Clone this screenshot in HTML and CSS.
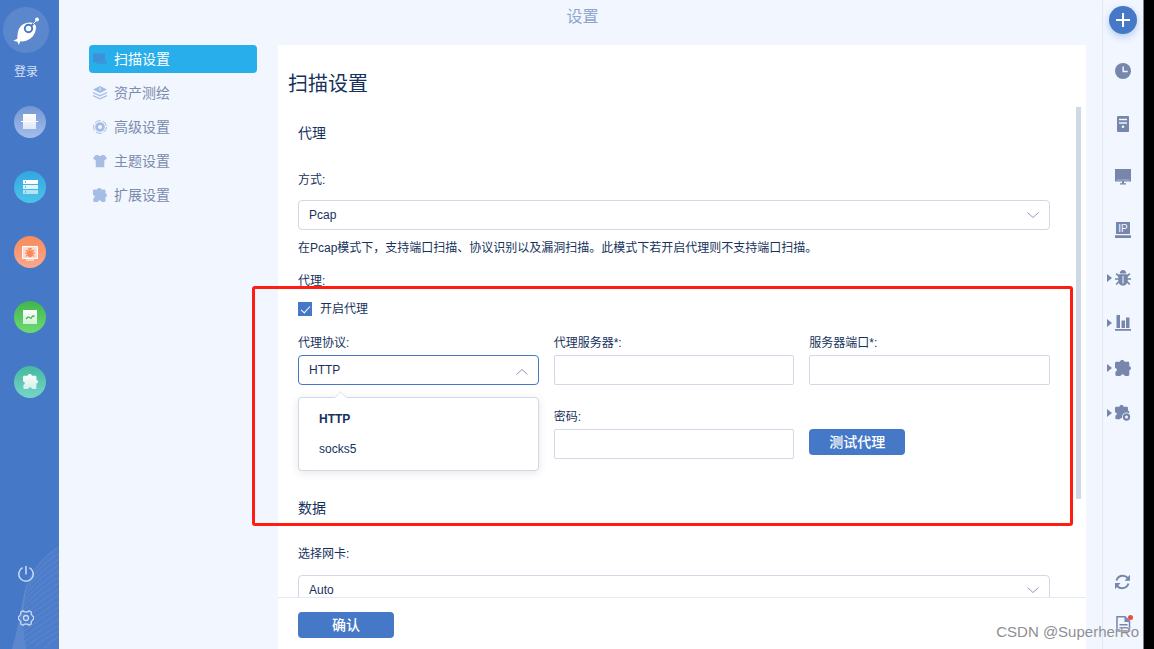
FILE: index.html
```html
<!DOCTYPE html>
<html lang="zh-CN">
<head>
<meta charset="utf-8">
<title>设置</title>
<link rel="stylesheet" href="styles.css">
</head>
<body>
<svg class="defs" aria-hidden="true">
  <defs>
    <linearGradient id="fade" x1="0" y1="0" x2="0" y2="1"><stop offset="0" stop-color="#fff"/><stop offset="1" stop-color="#fff" stop-opacity=".72"/></linearGradient>
    <symbol id="puzzle" viewBox="0 0 16 16"><path d="M1.500 1.800h3.400C5.200.5 6.100 0 7.200 0s2 .5 2.300 1.800h3.500c.8 0 1.300.5 1.300 1.200v3.200c1.100.2 1.700 1 1.700 2s-.6 1.800-1.700 2v4.400c0 .8-.5 1.300-1.300 1.300H9.800c-.2-1-.9-1.500-2.100-1.500s-1.900.5-2.100 1.500H1.700c-.8 0-1.300-.5-1.300-1.300v-3c1-.2 1.500-.8 1.500-1.700S1.400 8.200 0 8V3.200c0-.8.600-1.400 1.500-1.400z"/></symbol>
    <symbol id="bug" viewBox="0 0 16 16"><path d="M4.800 3.400C4.800 1.300 6.200 0 8 0s3.200 1.300 3.200 3.400z"/><path d="M3.300 4.300h9.400v6.200c0 3.100-1.900 5.200-4.700 5.200s-4.700-2.100-4.700-5.200z"/><path d="M4 6.500 1.200 3.700M4 9H0M4 11.500l-2.800 3M12 6.500l2.800-2.800M12 9h4M12 11.500l2.800 3" fill="none" stroke="currentColor" stroke-width="1.700"/></symbol>
  </defs>
</svg>
<div class="app">
  <aside class="side">
    <svg class="waves" viewBox="0 0 59 119" aria-hidden="true">
      <path class="wave-fill" d="M12 119C20 92 22 70 27 52C36 34 46 24 59 16V119z"/>
      <g class="wave-lines"><path d="M27 52Q38 30 59 17M26 57Q38 36 59 23M25 62Q38 42 59 29M24 67Q38 48 59 35M23 72Q38 54 59 41M23 77Q38 60 59 47M22 82Q38 66 59 53M22 87Q38 72 59 59M22 92Q38 78 59 65M23 97Q38 84 59 71M23 102Q38 90 59 77M24 107Q38 96 59 83M24 112Q38 102 59 89M25 117Q38 108 59 95M34 117Q44 108 59 101M44 118Q50 112 59 107"/></g>
      <path class="wave-edge" d="M12 119C20 92 21 70 27 52L22 92L26 119z"/>
    </svg>
    <button class="logo" type="button" aria-label="goby">
      <svg viewBox="0 0 46 46"><path fill="#fff" d="M33 19.500c.2 7.500-4.400 13.900-13.800 15.100l-2-.3-1.300 3.700-1.500-3.200-4-1 3.900-2.100c.1-4.200.5-8.800 3-11.900 3.500-4.300 10-5 14-3.500z"/><circle cx="25.500" cy="21.500" r="3.700" fill="none" stroke="#4678c8" stroke-width="1.900"/><path d="m28.200 18.800 3.500-3.500" stroke="#4678c8" stroke-width="1.900"/><path d="m30.200 16.800 3.600-3.700" stroke="#fff" stroke-width="1"/><circle cx="34" cy="12.500" r="1.900" fill="#fff"/></svg>
    </button>
    <a class="login" href="#">登录</a>
    <nav class="tasks" aria-label="功能">
      <button class="task task-scan" type="button" aria-label="扫描"><svg viewBox="0 0 32 32"><path fill="url(#fade)" d="M9 8h13v15H9z"/><path d="M7 15.500h17" stroke="#fff"/></svg></button>
      <button class="task task-asset" type="button" aria-label="资产"><svg viewBox="0 0 32 32"><path fill="#fff" d="M9 9h15v4H9z"/><path fill="#fff" opacity=".85" d="M9 14h15v4H9z"/><path fill="#fff" opacity=".6" d="M9 19h15v4H9z"/><path d="M11 11h1M11 16h1M11 21h1" stroke="#3aafe0" stroke-width="1.500"/></svg></button>
      <button class="task task-bug" type="button" aria-label="漏洞"><svg viewBox="0 0 32 32"><path fill="#ffd9cc" stroke="#fff" d="M8.500 10.500h15v12h-15z"/><path d="M12 24h8" stroke="#fff" stroke-width="1"/><g color="#f58a5e" fill="#f58a5e"><use href="#bug" x="11" y="11.500" width="10" height="10"/></g></svg></button>
      <button class="task task-report" type="button" aria-label="报告"><svg viewBox="0 0 32 32"><path fill="url(#fade)" d="M9 9h14v14H9z"/><path d="m12 18 2-2 1.500.5 1.500 1 1.500-2.500 1 .5 1-1" fill="none" stroke="#41b84e" stroke-width="1.200"/></svg></button>
      <button class="task task-ext" type="button" aria-label="扩展"><svg viewBox="0 0 32 32"><use href="#puzzle" x="9" y="8" width="15" height="15" fill="url(#fade)"/></svg></button>
    </nav>
    <div class="side-foot">
      <button class="plain" type="button" aria-label="退出"><svg viewBox="0 0 16 16"><path d="M8 0v8.500M4.600 1.700a7.200 7.200 0 1 0 6.800 0" fill="none" stroke="currentColor" stroke-width="1.500"/></svg></button>
      <button class="plain" type="button" aria-label="设置"><svg viewBox="0 0 16 16"><path d="m5 .7 1.400 1.200h3.200L11 .7l2.300 1.300-.2 2L14.500 6l1.200 1v2l-1.200 1-1.400 2 .2 2-2.300 1.300-1.400-1.200H6.400L5 15.300 2.700 14l.2-2-1.400-2L.3 9V7l1.200-1 1.400-2-.2-2z" fill="none" stroke="currentColor" stroke-width="1.300" stroke-linejoin="round"/><circle cx="8" cy="8" r="2.500" fill="none" stroke="currentColor" stroke-width="1.300"/></svg></button>
    </div>
  </aside>

  <div class="main">
    <header class="title">设置</header>
    <div class="work">
      <nav class="menu" aria-label="设置菜单">
        <a class="item active" href="#"><svg viewBox="0 0 14 14"><path d="M0 1.500h12v6H9.500L8 10H0z"/><path d="M3 10.500h5v1.200H3z"/><circle cx="11" cy="9.700" r="1.800" fill="none" stroke="currentColor" stroke-width="1.500"/></svg>扫描设置</a>
        <a class="item" href="#"><svg viewBox="0 0 14 14"><path d="M7 0 0 3.500 7 7l7-3.500z"/><path d="M7 1.500v3" stroke="#f1f6ff"/><path d="m0 6.500 7 3.300 7-3.300M0 9.500l7 3.300 7-3.300" fill="none" stroke="currentColor" stroke-width="1.200"/></svg>资产测绘</a>
        <a class="item" href="#"><svg viewBox="0 0 14 14"><circle cx="7" cy="7" r="3.400" fill="none" stroke="currentColor" stroke-width="2.800"/><circle cx="7" cy="7" r="6.400" fill="none" stroke="currentColor" stroke-width="1" stroke-dasharray="6 2"/></svg>高级设置</a>
        <a class="item" href="#"><svg viewBox="0 0 14 14"><path d="M4.500.7q2.500 2.600 5 0L12 1.500l2 3.300-2.700 1.500v7H2.700v-7L0 4.800l2-3.300z"/></svg>主题设置</a>
        <a class="item" href="#"><svg viewBox="0 0 16 16"><use href="#puzzle"/></svg>扩展设置</a>
      </nav>

      <form class="panel">
        <h1>扫描设置</h1>
        <div class="scroll">
          <section>
            <h2>代理</h2>
            <label class="lbl top" for="mode">方式:</label>
            <div class="sel">
              <select id="mode"><option>Pcap</option></select>
              <svg viewBox="0 0 12 6"><path d="m.5.5 5.500 5 5.500-5"/></svg>
            </div>
            <p class="help">在Pcap模式下，支持端口扫描、协议识别以及漏洞扫描。此模式下若开启代理则不支持端口扫描。</p>
            <div class="lbl">代理:</div>
            <label class="check"><input type="checkbox" checked>开启代理</label>
            <div class="grid">
              <div class="field">
                <label class="lbl" for="proto">代理协议:</label>
                <div class="sel open">
                  <select id="proto"><option>HTTP</option><option>socks5</option></select>
                  <svg viewBox="0 0 12 6"><path d="m.5 5.500 5.500-5 5.500 5"/></svg>
                  <ul class="drop" role="listbox" aria-label="代理协议">
                    <li class="on" role="option" aria-selected="true">HTTP</li>
                    <li role="option" aria-selected="false">socks5</li>
                  </ul>
                </div>
              </div>
              <div class="field">
                <label class="lbl" for="server">代理服务器*:</label>
                <input class="text" id="server" type="text">
              </div>
              <div class="field">
                <label class="lbl" for="port">服务器端口*:</label>
                <input class="text" id="port" type="text">
              </div>
              <div class="field second">
                <label class="lbl" for="pwd">密码:</label>
                <input class="text" id="pwd" type="password">
              </div>
              <div class="field end"><button class="btn" type="button">测试代理</button></div>
            </div>
          </section>
          <section class="data">
            <h2>数据</h2>
            <label class="lbl top" for="card">选择网卡:</label>
            <div class="sel">
              <select id="card"><option>Auto</option></select>
              <svg viewBox="0 0 12 6"><path d="m.5.5 5.500 5 5.500-5"/></svg>
            </div>
          </section>
          <div class="thumb"></div>
        </div>
        <footer><button class="btn" type="button">确认</button></footer>
        <div class="mark"></div>
      </form>
    </div>
  </div>

  <aside class="tools">
    <button class="add" type="button" aria-label="新建"><svg viewBox="0 0 28 28"><path d="M14 7v14M7 14h14" stroke="#fff" stroke-width="2"/></svg></button>
    <div class="group wide">
      <button class="tool" type="button" aria-label="历史"><svg viewBox="0 0 16 16"><circle cx="8" cy="8" r="8"/><path d="M8.200 3.500v5h4.500" fill="none" stroke="#f1f6ff" stroke-width="1.500"/></svg></button>
      <button class="tool" type="button" aria-label="资产"><svg viewBox="0 0 16 16"><rect x="2" width="12" height="16" rx="1"/><path d="M4 3.500h8M4 7h8" stroke="#f1f6ff" stroke-width="1.500"/><circle cx="8" cy="10.800" r="1.300" fill="#f1f6ff"/></svg></button>
      <button class="tool" type="button" aria-label="主机"><svg viewBox="0 0 16 16"><path d="M0 0h16v12.500H0zM7 12h2v2.500H7zM5 14.200h6v1.300H5z"/><path d="M1.500 11h13" stroke="#a9b6d0"/></svg></button>
      <button class="tool" type="button" aria-label="IP"><svg viewBox="0 0 16 16"><path d="M1 0h14v12H1zM0 13.300h16V16H0z"/><text x="8" y="9.800" text-anchor="middle">IP</text></svg></button>
    </div>
    <div class="group">
      <button class="tool more" type="button" aria-label="漏洞"><svg viewBox="0 0 16 16"><use href="#bug"/><path d="M8 6v7.500" stroke="#f1f6ff"/></svg></button>
      <button class="tool more" type="button" aria-label="统计"><svg viewBox="0 0 16 16"><path d="M1.500 0H5v13H1.500zM6.500 5.500H10V13H6.500zM11 2.500h3.500V13H11zM0 14h16v1.800H0z"/></svg></button>
      <button class="tool more" type="button" aria-label="扩展"><svg viewBox="0 0 16 16"><use href="#puzzle"/></svg></button>
      <button class="tool more" type="button" aria-label="扩展设置"><svg viewBox="0 0 16 16"><use href="#puzzle" width="14.500" height="14.500"/><circle cx="11.500" cy="12" r="4.500" fill="#f1f6ff"/><circle cx="11.500" cy="12" r="2.600" fill="none" stroke="currentColor" stroke-width="2.200"/></svg></button>
    </div>
    <div class="group wide last">
      <button class="tool" type="button" aria-label="刷新"><svg viewBox="0 0 16 16"><path d="M1.500 6.500C2.500 3.300 5 1.800 8 1.800c2 0 3.500.8 4.800 2.200M13.500 9.500c-1 3.200-3.500 4.700-6.500 4.700-2 0-3.500-.8-4.800-2.200" fill="none" stroke="currentColor" stroke-width="2"/><path d="M15 .8v6H9.500zM0 15.200V9h5.600z"/></svg></button>
      <button class="tool dot" type="button" aria-label="日志"><svg viewBox="0 0 16 16"><path d="M2 .8h8L14.500 5v10H2z" fill="none" stroke="currentColor" stroke-width="1.500"/><path d="M9.500.8V6h5zM4.500 8h8v1.500h-8zM4.500 11h8v1.500h-8z"/></svg></button>
    </div>
  </aside>
  <div class="edge"></div>
  <div class="credit">CSDN @SuperherRo</div>
</div>
</body>
</html>
```
FILE: styles.css
```css
* { box-sizing: border-box; }
body {
  margin: 0;
  font: 12px/16px "Liberation Sans", "Noto Sans CJK SC", sans-serif;
  color: #16325c;
  background: #f1f6ff;
}
button, select, input { font: inherit; color: inherit; margin: 0; }
button { border: 0; padding: 0; background: none; cursor: pointer; }
a { text-decoration: none; color: inherit; }
svg { display: block; }
.defs { position: absolute; width: 0; height: 0; }
.app { position: relative; display: flex; height: 100vh; overflow: hidden; }

/* left rail */
.side {
  position: relative;
  flex: 0 0 59px;
  display: flex;
  flex-direction: column;
  padding: 7px 0 23px;
  background: #4678c8;
}
.waves { position: absolute; left: 0; bottom: 0; width: 59px; height: 119px; }
.wave-fill { fill: #fff; opacity: .04; }
.wave-edge { fill: #fff; opacity: .08; }
.wave-lines { fill: none; stroke: #fff; stroke-width: 1; opacity: .08; }
.logo { width: 46px; height: 46px; margin-left: 3px; border-radius: 50%; background: #5b87cd; }
.logo svg { width: 46px; height: 46px; }
.login { margin: 11px 0 0 14px; color: #d3e0f5; }
.tasks { display: flex; flex-direction: column; gap: 33px; margin: 26px 0 0 14px; }
.task { width: 32px; height: 32px; border-radius: 50%; }
.task svg { width: 32px; height: 32px; }
.task-scan { background: linear-gradient(#7397d2, #a3bdec); }
.task-asset { background: linear-gradient(#32a7df, #4bc4ea); }
.task-bug { background: linear-gradient(#f78b5b, #f9a88d); }
.task-report { background: linear-gradient(#3fb54c, #6edb72); }
.task-ext { background: linear-gradient(#46b8a0, #77d6c8); }
.side-foot { position: relative; display: flex; flex-direction: column; gap: 28px; margin: auto 0 0 18px; }
.plain { width: 16px; height: 16px; color: #cddcf5; }

/* centre */
.main { flex: 1; min-width: 0; display: flex; flex-direction: column; }
.title { height: 45px; padding: 5px 0 0 4px; line-height: 24px; font-size: 16px; text-align: center; color: #8ea5cc; }
.work { flex: 1; min-height: 0; display: flex; padding: 0 16px 0 30px; }
.menu { flex: 0 0 168px; margin-right: 21px; display: flex; flex-direction: column; gap: 6px; }
.item {
  display: flex;
  align-items: center;
  gap: 7px;
  height: 28px;
  padding-left: 4px;
  border-radius: 4px;
  font-size: 14px;
  color: #7c8bab;
}
.item svg { width: 14px; height: 14px; color: #a5bce4; fill: currentColor; }
.item.active { background: #28aeea; color: #fff; }
.item.active svg { color: #3e90d8; }

.panel { position: relative; flex: 1; min-width: 0; display: flex; flex-direction: column; background: #fff; }
h1 { margin: 25px 10px 9px; font-size: 20px; line-height: 28px; font-weight: 400; }
h2 { margin: 0; font-size: 14px; line-height: 20px; font-weight: 400; }
.scroll { position: relative; flex: 1; min-height: 0; overflow: hidden; padding: 16px 36px 0 20px; }
.thumb { position: absolute; top: 0; right: 5px; width: 5px; height: 80%; background: #cfd9e6; }
.lbl { display: block; line-height: 16px; }
.lbl.top { margin: 29px 0 12px; }
.sel { position: relative; }
.sel select {
  display: block;
  width: 100%;
  height: 30px;
  padding: 0 10px;
  border: 1px solid #cfd9e8;
  border-radius: 4px;
  background: #fff;
  appearance: none;
}
.sel > svg { position: absolute; right: 11px; top: 12px; width: 12px; height: 6px; fill: none; stroke: #8b9bb8; pointer-events: none; }
.sel.open select { border-color: #4678c8; }
.sel.open > svg { top: 14px; }
.help { margin: 10px 0 17px; }
.check { display: flex; align-items: center; gap: 8px; margin-top: 12px; }
.check input {
  appearance: none;
  width: 14px;
  height: 14px;
  background: #4678c8;
}
.check input::after {
  content: "";
  display: block;
  width: 4px;
  height: 8px;
  margin: 2px 0 0 5px;
  border: solid #fff;
  border-width: 0 1px 1px 0;
  transform: rotate(42deg);
}
.grid { display: grid; grid-template-columns: repeat(3, 1fr); gap: 24px 15px; margin-top: 18px; }
.field .lbl { margin-bottom: 4px; }
.second { grid-column: 2; }
.end { padding-top: 20px; }
.text { display: block; width: 100%; height: 30px; padding: 0 10px; border: 1px solid #cfd9e8; border-radius: 2px; background: #fff; }
.drop {
  position: absolute;
  z-index: 2;
  top: 42px;
  left: 0;
  right: 0;
  margin: 0;
  padding: 6px 0;
  list-style: none;
  line-height: 30px;
  border: 1px solid #cfd9e8;
  border-radius: 4px;
  background: #fff;
  box-shadow: 0 2px 10px rgba(0, 0, 0, .1);
}
.drop::before {
  content: "";
  position: absolute;
  top: -5px;
  left: 37px;
  width: 8px;
  height: 8px;
  border: solid #dfe6f0;
  border-width: 1px 0 0 1px;
  background: #fff;
  transform: rotate(45deg);
}
.drop li { padding-left: 20px; }
.drop .on { font-weight: 700; }
.data { margin-top: 39px; }
.data .lbl.top { margin-top: 28px; margin-bottom: 13px; }
.btn { display: block; width: 96px; height: 26px; border-radius: 4px; background: #4678c8; color: #fff; font-size: 14px; font-weight: 500; }
footer { padding: 14px 20px 11px; border-top: 1px solid #e3eaf6; }
.mark { position: absolute; z-index: 3; top: 241px; left: -26px; right: 13px; height: 240px; border: 3px solid #ff1c10; border-radius: 3px; pointer-events: none; }

/* right rail */
.tools {
  flex: 0 0 41px;
  display: flex;
  flex-direction: column;
  align-items: center;
  padding: 6px 0 17px;
  border-left: 1px solid #e1e8f6;
}
.add { width: 28px; height: 28px; border-radius: 50%; background: #4678c8; box-shadow: 0 3px 7px rgba(70, 120, 200, .35); }
.group { display: flex; flex-direction: column; gap: 29px; margin-top: 32px; }
.group.wide { gap: 37px; margin-top: 29px; }
.group.last { gap: 26px; margin-top: auto; }
.tool { position: relative; width: 16px; height: 16px; color: #7687ab; }
.tool svg { width: 16px; height: 16px; fill: currentColor; }
.tool text { fill: #f1f6ff; font-size: 10px; }
.more::before {
  content: "";
  position: absolute;
  left: -8px;
  top: 4px;
  border: solid transparent;
  border-width: 4px 0 4px 5px;
  border-left-color: #7687ab;
}
.dot::after { content: ""; position: absolute; top: -1px; right: -2px; width: 5px; height: 5px; border-radius: 50%; background: #f04a40; }
.edge { flex: 0 0 11px; background: #000; border-left: 1px solid #7d828a; }
.credit { position: absolute; right: 15px; bottom: 7px; font-size: 15px; line-height: 20px; color: #8d8f94; text-shadow: 0 0 1px #fff; }
```
